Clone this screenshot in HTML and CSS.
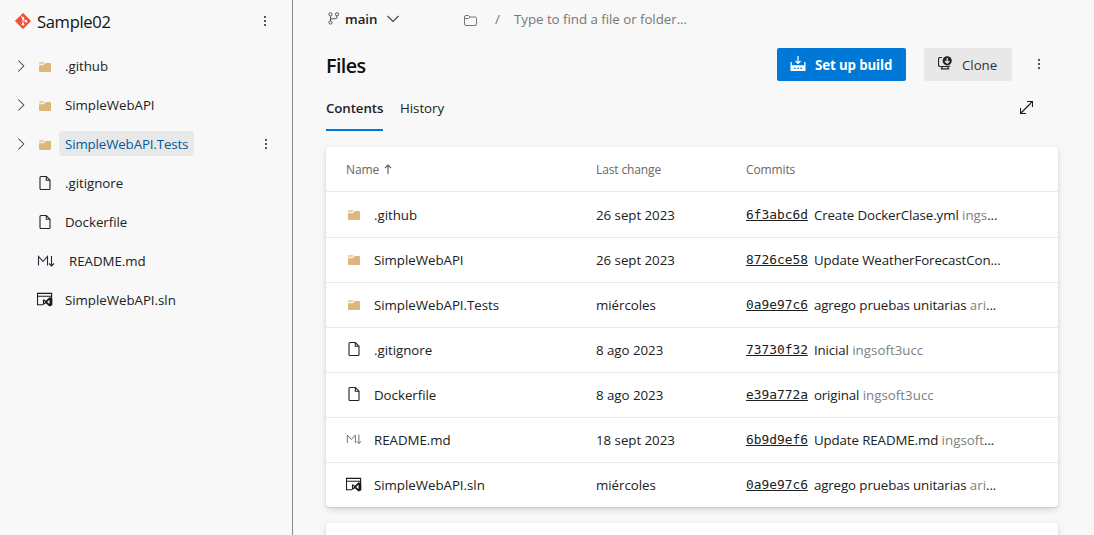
FILE: index.html
```
<!DOCTYPE html>
<html lang="en">
<head>
<meta charset="utf-8">
<title>Sample02 - Files</title>
<link rel="stylesheet" href="styles.css">
</head>
<body>
<svg class="defs" width="0" height="0">
  <symbol id="chevron" viewBox="0 0 16 16"><path d="M5.300 2.500 10.800 8l-5.500 5.500" fill="none" stroke="#4a4448" stroke-width="1.050"/></symbol>
  <symbol id="folder" viewBox="0 0 16 16"><path d="M2 4.800V4q0-1 1-1h3.200l1.300.8-1.200 1.400H2z" fill="#e8cfa6"/><path d="M2 6.200h4.500L9 4h4q1 0 1 1v6.800q0 1.200-1.200 1.200H3.200Q2 13 2 11.800z" fill="#dcb67a"/></symbol>
  <symbol id="file" viewBox="0 0 16 16"><path d="M4 1.500h5.300l3.700 3.700v8.300q0 1-1 1H4q-1 0-1-1v-11q0-1 1-1zM9.300 1.500v3.700H13" fill="none" stroke="#2c1c2c" stroke-width="1.100"/></symbol>
  <symbol id="markdown" viewBox="0 0 18 16"><path d="M1.500 12.500v-9l4.500 5 4.500-5v9M14.500 3v10M12 10.500l2.500 2.500 2.500-2.500" fill="none" stroke="currentColor" stroke-width="1.100"/></symbol>
  <symbol id="solution" viewBox="0 0 17 17"><path d="M6.500 13.500h-6v-12h15v5M.5 4.500h15" fill="none" stroke="#1c181c" stroke-width="1.200"/><path d="m13.300 5.500 3 1.200v7.500l-3 1.300-4-3.600-2 1.600-1-.5V8.200l1-.5 2 1.500zM7.500 9.300v2.400L8.700 10.500zM13.300 8.200 10.700 10.500l2.600 2.200z" fill="#1c181c" fill-rule="evenodd"/></symbol>
  <symbol id="more" viewBox="0 0 4 12"><path d="M1 1h2v2H1zM1 5h2v2H1zM1 9h2v2H1z" fill="currentColor"/></symbol>
</svg>
<div class="app">
  <aside class="sidebar">
    <header class="repo">
      <svg class="git" viewBox="0 0 16 16"><path d="M8 .3 15.700 8 8 15.700.3 8z" fill="#f05033" stroke="#f05033" stroke-width=".7" stroke-linejoin="round"/><path d="M5.500 2.500 8 5v6M8 5.500l3 3" fill="none" stroke="#fff" stroke-width="1"/><circle cx="8" cy="5" r="1.200" fill="#fff"/><circle cx="8" cy="11.300" r="1.300" fill="#fff"/><circle cx="11" cy="8.300" r="1.200" fill="#fff"/></svg>
      <h2 class="repo-name">Sample02</h2>
      <svg class="more repo-more"><use href="#more"/></svg>
    </header>
    <ul class="tree">
      <li class="node"><svg class="chev"><use href="#chevron"/></svg><svg class="icon"><use href="#folder"/></svg><span class="label">.github</span></li>
      <li class="node"><svg class="chev"><use href="#chevron"/></svg><svg class="icon"><use href="#folder"/></svg><span class="label">SimpleWebAPI</span></li>
      <li class="node"><svg class="chev"><use href="#chevron"/></svg><svg class="icon"><use href="#folder"/></svg><span class="label selected">SimpleWebAPI.Tests</span><svg class="more node-more"><use href="#more"/></svg></li>
      <li class="node leaf"><svg class="icon"><use href="#file"/></svg><span class="label">.gitignore</span></li>
      <li class="node leaf"><svg class="icon"><use href="#file"/></svg><span class="label">Dockerfile</span></li>
      <li class="node leaf"><svg class="icon md-large"><use href="#markdown"/></svg><span class="label readme">README.md</span></li>
      <li class="node leaf"><svg class="icon sln"><use href="#solution"/></svg><span class="label">SimpleWebAPI.sln</span></li>
    </ul>
  </aside>
  <main class="main">
    <div class="pathbar">
      <svg class="branch" viewBox="0 0 12 13"><g fill="none" stroke="#555" stroke-width="1"><circle cx="2.500" cy="2.300" r="1.600"/><circle cx="9" cy="2.300" r="1.600"/><circle cx="2.500" cy="10.500" r="1.600"/><path d="M2.500 4v5M9 4v1q0 1.800-1.800 1.800H2.500"/></g></svg>
      <span class="branch-name">main</span>
      <svg class="down" viewBox="0 0 12 8"><path d="m.5 1 5.500 5.500L11.500 1" fill="none" stroke="#444" stroke-width="1.100"/></svg>
      <svg class="root" viewBox="0 0 13 11"><path d="M.5 9V2q0-1.500 1.500-1.500h2.500L6 2h5q1.500 0 1.500 1.500V9q0 1.500-1.500 1.500H2Q.5 10.500.5 9zM1 3.500h3.500L6 2" fill="none" stroke="#777"/></svg>
      <span class="slash">/</span>
      <span class="finder">Type to find a file or folder...</span>
    </div>
    <div class="titlebar">
      <h1 class="title">Files</h1>
      <button class="btn primary"><svg class="build" viewBox="0 0 16 16"><path d="M8 0v7.500M5.500 5 8 7.500 10.500 5" fill="none" stroke="#fff" stroke-width="1.200"/><path d="M.5 6h1.300v3.300h12.400V6h1.300v9H.5zM4 11.700v1.300h1.700v-1.300zM7.200 11.700v1.300h1.700v-1.300zM10.400 11.700v1.300h1.700v-1.300z" fill="#fff" fill-rule="evenodd"/></svg><span class="build-text">Set up build</span></button>
      <button class="btn"><svg class="clone" viewBox="0 0 14 14"><path d="M4 1.500H2q-1.500 0-1.500 1.500v6q0 1.500 1.500 1.500h8.500q1 0 1.500-.8M4 10.500v2M10 10.500v2M2.800 12.800h8.400" fill="none" stroke="#222" stroke-width="1.200"/><circle cx="9.200" cy="4.800" r="4.600" fill="#222"/><path d="M9.200 2v5M7 5l2.200 2.200L11.400 5" fill="none" stroke="#eee" stroke-width="1.200"/></svg><span class="clone-text">Clone</span></button>
      <svg class="more title-more"><use href="#more"/></svg>
    </div>
    <nav class="tabs">
      <span class="tab active">Contents</span>
      <span class="tab">History</span>
      <svg class="expand" viewBox="0 0 13 13"><path d="M7 .5h5.500V6M12.500.5l-12 12M.5 7v5.500H6" fill="none" stroke="#211b21" stroke-width="1.150"/></svg>
    </nav>
    <section class="card files">
      <div class="row head"><span>Name <svg class="sort" viewBox="0 0 8 10"><path d="M4 10V1M1 4l3-3 3 3" fill="none" stroke="#666" stroke-width="1.200"/></svg></span><span>Last change</span><span>Commits</span></div>
      <div class="row first"><span class="name"><svg class="icon"><use href="#folder"/></svg>.github</span><span>26 sept 2023</span><span class="commit"><a class="hash">6f3abc6d</a><span>Create DockerClase.yml <i class="author">ings</i>...</span></span></div>
      <div class="row"><span class="name"><svg class="icon"><use href="#folder"/></svg>SimpleWebAPI</span><span>26 sept 2023</span><span class="commit"><a class="hash">8726ce58</a><span>Update WeatherForecastCon...</span></span></div>
      <div class="row"><span class="name"><svg class="icon"><use href="#folder"/></svg>SimpleWebAPI.Tests</span><span>miércoles</span><span class="commit"><a class="hash">0a9e97c6</a><span>agrego pruebas unitarias <i class="author">ari</i>...</span></span></div>
      <div class="row"><span class="name"><svg class="icon raised"><use href="#file"/></svg>.gitignore</span><span>8 ago 2023</span><span class="commit"><a class="hash">73730f32</a><span>Inicial <i class="author">ingsoft3ucc</i></span></span></div>
      <div class="row"><span class="name"><svg class="icon raised"><use href="#file"/></svg>Dockerfile</span><span>8 ago 2023</span><span class="commit"><a class="hash">e39a772a</a><span>original <i class="author">ingsoft3ucc</i></span></span></div>
      <div class="row"><span class="name"><svg class="icon md-small raised"><use href="#markdown"/></svg>README.md</span><span>18 sept 2023</span><span class="commit"><a class="hash">6b9d9ef6</a><span>Update README.md <i class="author">ingsoft</i>...</span></span></div>
      <div class="row"><span class="name"><svg class="icon sln"><use href="#solution"/></svg>SimpleWebAPI.sln</span><span>miércoles</span><span class="commit"><a class="hash">0a9e97c6</a><span>agrego pruebas unitarias <i class="author">ari</i>...</span></span></div>
    </section>
    <section class="card next"></section>
  </main>
</div>
</body>
</html>
```

FILE: styles.css
```
* { box-sizing: border-box; }
body {
  margin: 0;
  background: #f8f8f8;
  color: #202020;
  font: 13.3px/20px "Open Sans", "Noto Sans", sans-serif;
  letter-spacing: -.03px;
  overflow: hidden;
}
svg { display: block; flex: none; }
.defs { position: absolute; }
.app { display: flex; height: 535px; overflow: hidden; }

.sidebar { width: 293px; flex: none; border-right: 1px solid #898989; }
.repo { display: flex; align-items: center; height: 44px; padding: 0 25px 0 15px; margin-bottom: 2px; }
.git { width: 16px; height: 16px; margin-right: 6px; margin-bottom: 2px; }
.repo-name { margin: 0; font-size: 16.6px; font-weight: 400; color: #111; letter-spacing: -.35px; }
.more { width: 4px; height: 12px; color: #555; }
.repo-more { margin-left: auto; margin-bottom: 2px; }
.tree { list-style: none; margin: 0; padding: 0; }
.node { display: flex; align-items: center; height: 39px; padding: 0 24px 0 13px; }
.leaf { padding-left: 37px; }
.chev { width: 16px; height: 16px; margin-right: 8px; }
.icon { width: 16px; height: 16px; }
.chev + .icon { margin-top: 2px; }
.label { margin-left: 6px; padding: 0 6px; height: 25px; line-height: 26px; border-radius: 4px; white-space: nowrap; }
.selected { width: 135px; background: #e8e8e8; color: #005a9e; letter-spacing: -.13px; }
.readme { padding-left: 8px; }
.node-more { margin-left: auto; }
.md-large { width: 18px; color: #33203a; }

.main { flex: 1; padding: 0 36px 0 33px; }
.pathbar { display: flex; align-items: center; height: 38px; }
.branch { width: 12px; height: 13px; margin: 0 5px 2px 2px; }
.branch-name { font-weight: 600; width: 42px; }
.down { width: 12px; height: 8px; }
.root { width: 13px; height: 11px; margin-left: 65px; margin-top: 2px; }
.slash { margin-left: 18px; width: 19px; color: #767676; }
.finder { color: #767676; }
.titlebar { display: flex; align-items: center; height: 53px; }
.title { margin: 2px auto 0 0; font-size: 19.8px; line-height: 28px; font-weight: 600; color: #111; letter-spacing: -.6px; }
.btn { display: flex; align-items: center; height: 33px; margin-right: 18px; border: 0; border-radius: 2px; padding: 0 13px; background: #e8e8e8; color: #333; font: 600 13.3px/20px "Open Sans", sans-serif; white-space: nowrap; }
.btn:not(.primary) { width: 88px; font-weight: 500; letter-spacing: -.05px; margin-right: 25px; }
.primary { width: 129px; background: #0078d7; color: #fff; font-weight: 700; letter-spacing: -.12px; }
.build { width: 16px; height: 16px; margin: 0 9px 2px 0; }
.clone { width: 14px; height: 14px; margin: 0 10px 3px 1px; }
.title-more { margin-right: 17px; margin-bottom: 2px; }
.tabs { display: flex; height: 41px; }
.tab { height: 40px; line-height: 34px; margin-right: 17px; }
.active { width: 57px; font-weight: 600; letter-spacing: -.1px; border-bottom: 2px solid #0078d7; white-space: nowrap; }
.expand { width: 13px; height: 13px; margin: 10px 25px 0 auto; }

.card { background: #fff; border-radius: 4px; box-shadow: 0 3px 7px rgba(0,0,0,.13), 0 1px 2px rgba(0,0,0,.1); }
.files { height: 360px; margin-top: 15px; }
.row { display: grid; grid-template-columns: 250px 150px 1fr; align-items: center; height: 45px; padding: 0 20px; border-bottom: 1px solid #eaeaea; white-space: nowrap; }
.row:last-child { height: 44px; border-bottom: 0; }
.first { height: 46px; }
.head { font-size: 12px; color: #666; padding-top: 2px; letter-spacing: -.12px; }
.sort { display: inline; width: 8px; height: 10px; margin-left: 2px; }
.name { display: flex; align-items: center; }
.name .icon { margin-right: 12px; }
.name .raised { margin-bottom: 2px; }
.md-small { color: #706b75; }
.commit { display: flex; align-items: center; letter-spacing: -.1px; }
.hash { font: 12.85px/20px "DejaVu Sans Mono", monospace; letter-spacing: 0; text-decoration: underline; margin-right: 6px; }
.author { font-style: normal; color: #808080; letter-spacing: .02px; }
.next { height: 60px; margin-top: 16px; }
```
